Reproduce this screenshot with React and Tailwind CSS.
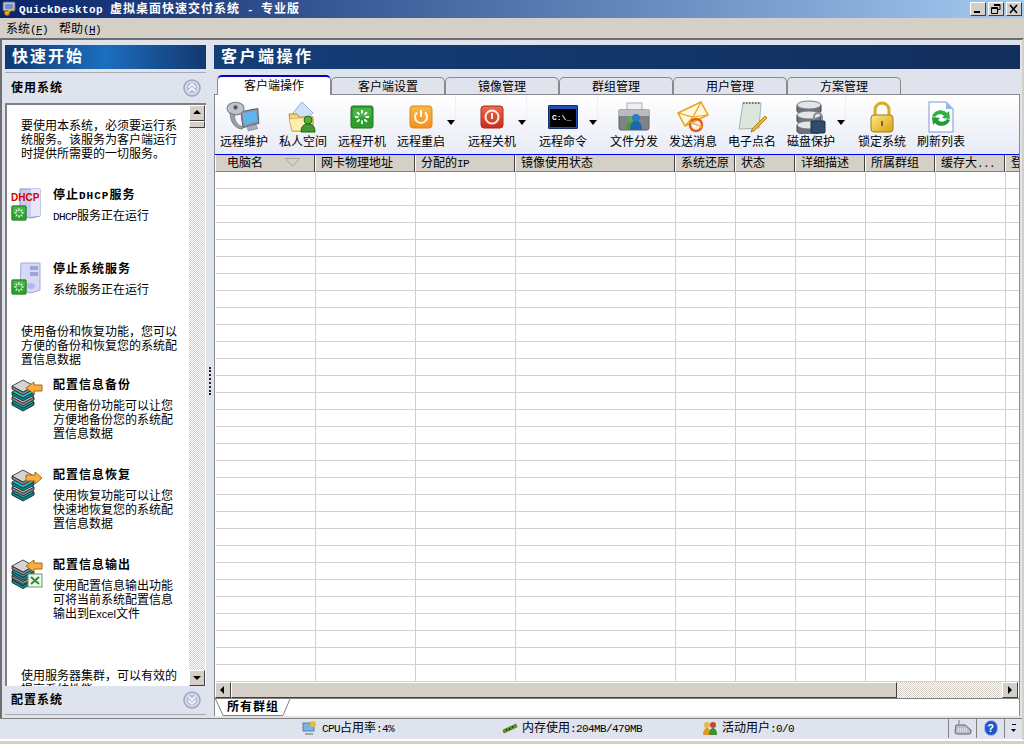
import React from "react";

const bevel = "border border-t-white border-l-white border-r-[#404040] border-b-[#404040] bg-[#d4d0c8]";
const hatch = "bg-[repeating-conic-gradient(#d4d0c8_0_25%,#ffffff_0_50%)] bg-[length:2px_2px]";

function Mono({ children }) {
  return <span className="font-['Liberation_Mono',monospace] text-[11px] tracking-[-0.6px] leading-none">{children}</span>;
}

function Spark({ size = 32, x = 0, y = 0 }) {
  // green square with a ring of white dashes
  const ticks = [0, 45, 90, 135, 180, 225, 270, 315];
  return (
    <svg x={x} y={y} width={size} height={size} viewBox="0 0 24 24">
      <rect x="1" y="1" width="22" height="22" rx="2" fill="#2f9e2f" stroke="#1c7a1c" />
      <rect x="3" y="3" width="18" height="9" fill="#5cc05c" opacity=".6" />
      {ticks.map((a) => (
        <line key={a} x1="12" y1="5" x2="12" y2="8.5" stroke="#fff" strokeWidth="1.8" transform={`rotate(${a} 12 12)`} />
      ))}
    </svg>
  );
}

function PowerIcon({ from, to, edge, ring }) {
  const id = "p" + from.slice(1);
  return (
    <svg width="24" height="24" viewBox="0 0 24 24">
      <defs>
        <linearGradient id={id} x1="0" y1="0" x2="0" y2="1">
          <stop offset="0" stopColor={from} />
          <stop offset="1" stopColor={to} />
        </linearGradient>
      </defs>
      <rect x="1" y="1" width="22" height="22" rx="3" fill={`url(#${id})`} stroke={edge} />
      {ring ? (
        <circle cx="12" cy="12" r="6.500" fill="none" stroke="#fff" strokeWidth="2" opacity=".9" />
      ) : (
        <path d="M8 7.5a6 6 0 1 0 8 0" fill="none" stroke="#fff" strokeWidth="2" opacity=".9" />
      )}
      <path d={ring ? "M12 8v6" : "M12 5v7"} stroke="#fff" strokeWidth="2" opacity=".9" />
    </svg>
  );
}

function MaintainIcon() {
  return (
    <svg width="36" height="36" viewBox="0 0 34 34">
      <path d="M14 12l16-3 1 14-15 4z" fill="#8a95a6" stroke="#5c6678" />
      <path d="M16 13.500l12.500-2.500 .8 10-12 2.800z" fill="#5fb6ee" />
      <path d="M20 26l8-2 2 4-9 2z" fill="#a9b1be" stroke="#6c7482" strokeWidth=".6" />
      <ellipse cx="9" cy="9" rx="8" ry="6" fill="#bfc4cc" stroke="#7b808a" />
      <path d="M4 13c0 8 3 13 9 15 3 1 4-1 2-2-5-2-7-6-7-11z" fill="#9aa0aa" stroke="#6d727c" strokeWidth=".7" />
      <circle cx="9" cy="8" r="2" fill="#555" />
    </svg>
  );
}

function PrivateIcon() {
  return (
    <svg width="30" height="32" viewBox="0 0 30 32">
      <path d="M14 1l11 11-11 10L5 12z" fill="#cfe2f8" stroke="#8fb0d8" />
      <path d="M1 13h8l2 3h14v14H4z" fill="#f6d879" stroke="#b08d2c" />
      <path d="M1 18l22-2-1 14H4z" fill="#fdeeb0" stroke="#c7a33c" strokeWidth=".7" />
      <circle cx="20" cy="19" r="4" fill="#4fae3c" stroke="#2c6e22" />
      <path d="M13 31c0-6 3-8 7-8s7 2 7 8z" fill="#3f9a31" stroke="#22601b" />
    </svg>
  );
}

function TerminalIcon() {
  return (
    <div className="w-[30px] h-[24px] bg-[#1d4fb4] border border-[#12306e] rounded-[1px] pt-[3px] px-[1px] pb-[1px]">
      <div className="bg-black h-full flex items-center pl-[2px] font-['Liberation_Mono',monospace] text-[8px] font-bold leading-none text-white">C:\_</div>
    </div>
  );
}

function FilesIcon() {
  return (
    <svg width="32" height="30" viewBox="0 0 32 30">
      <rect x="9" y="1" width="15" height="9" fill="#eef0f2" stroke="#a9adb3" />
      <path d="M1 8h30v18a2 2 0 0 1-2 2H3a2 2 0 0 1-2-2z" fill="#7f8388" stroke="#5f6368" />
      <rect x="1" y="8" width="30" height="6" fill="#b8bcc1" />
      <circle cx="13" cy="17" r="3" fill="#5bb04a" />
      <path d="M8 27c0-5 2-7 5-7s5 2 5 7z" fill="#4c9a3c" />
      <circle cx="18" cy="16" r="4" fill="#2e7cc4" />
      <path d="M12 28c0-7 3-9 6-9s6 2 6 9z" fill="#1e66ae" />
    </svg>
  );
}

function MailIcon() {
  return (
    <svg width="32" height="32" viewBox="0 0 32 32">
      <path d="M1 12L24 1l7 13-23 11z" fill="#fff8dc" stroke="#e8a11e" strokeWidth="1.500" />
      <path d="M1 12l15 4L24 1M8 25l8-9 15-2" fill="none" stroke="#e8a11e" strokeWidth="1.200" />
      <circle cx="19" cy="24" r="6" fill="none" stroke="#e4611a" strokeWidth="2.500" />
      <path d="M13 21l12 5" stroke="#f5b43c" strokeWidth="1.500" />
    </svg>
  );
}

function NoteIcon() {
  return (
    <svg width="32" height="32" viewBox="0 0 32 32">
      <path d="M7 2h18l-2 25-20 1z" fill="#dde6da" stroke="#aab3a8" />
      <path d="M7 2h18" stroke="#777" strokeWidth="2" strokeDasharray="1.500 1.500" />
      <path d="M29 15l2 2-13 13-3 1 1-3z" fill="#f2b23a" stroke="#a26d14" strokeWidth=".8" />
    </svg>
  );
}

function DiskIcon() {
  return (
    <svg width="32" height="34" viewBox="0 0 32 34">
      {[1, 11, 21].map((y) => (
        <g key={y}>
          <path d={`M2 ${y + 4}v6c0 2 6 4 12 4s12-2 12-4v-6z`} fill="#6e7278" stroke="#3d4045" />
          <ellipse cx="14" cy={y + 4} rx="12" ry="4" fill="#e3e5e8" stroke="#777b80" />
        </g>
      ))}
      <path d="M19 21v-4a4 4 0 0 1 8 0v4" fill="none" stroke="#8b8f95" strokeWidth="2" />
      <rect x="16" y="21" width="14" height="12" rx="1" fill="#2f4c6e" stroke="#1b2f49" />
    </svg>
  );
}

function LockIcon() {
  return (
    <svg width="26" height="32" viewBox="0 0 26 32">
      <defs>
        <linearGradient id="gold" x1="0" y1="0" x2="1" y2="1">
          <stop offset="0" stopColor="#ffe988" />
          <stop offset="1" stopColor="#d99f10" />
        </linearGradient>
      </defs>
      <path d="M6 15V9a7 7 0 0 1 14 0v6" fill="none" stroke="#d9ab22" strokeWidth="3" />
      <rect x="2" y="14" width="22" height="17" rx="3" fill="url(#gold)" stroke="#a87a12" />
      <path d="M13 20v5" stroke="#8a6410" strokeWidth="2" />
    </svg>
  );
}

function RefreshIcon() {
  return (
    <svg width="26" height="32" viewBox="0 0 26 32">
      <path d="M1 1h17l7 7v23H1z" fill="#fff" stroke="#a9b6e6" strokeWidth="1.500" />
      <path d="M18 1v7h7z" fill="#8bbcf0" />
      <path d="M4 15c2-6 11-8 15-3l2-2 1 8-8-1 2-2c-3-3-7-2-9 1z" fill="#2fb344" />
      <path d="M22 19c-2 6-11 8-15 3l-2 2-1-8 8 1-2 2c3 3 7 2 9-1z" fill="#1f9a3a" />
    </svg>
  );
}

const layers = [[16, "#1cc4c8", "#0a8a90"], [11, "#d8d8d8", "#8a8a8a"], [6, "#1cc4c8", "#0a8a90"], [0, "#d4d4d4", "#8a8a8a"]];

function Layers({ step = 1 }) {
  return layers.map(([y, c, side]) => (
    <g key={y}>
      <path d={`M1 ${y * step + 8}l11 6 11-6v3l-11 6-11-6z`} fill={side} stroke="#111" strokeWidth=".8" />
      <path d={`M1 ${y * step + 8}l11-6 11 6-11 6z`} fill={c} stroke="#222" strokeWidth=".8" />
    </g>
  ));
}

function Stack({ tail }) {
  return (
    <svg width="32" height="34" viewBox="0 0 32 34">
      <Layers />
      {tail}
    </svg>
  );
}

const arrowLeft = <path d="M15 10l8-6v3h8v6h-8v3z" fill="#f6b042" stroke="#a8660e" />;
const arrowRight = <path d="M31 10l-7-6v3h-9v6h9v3z" fill="#f6b042" stroke="#a8660e" />;

function DhcpIcon() {
  return (
    <svg width="32" height="34" viewBox="0 0 32 34">
      <path d="M9 1h20v27l-9 2-11-2z" fill="#c9cdf0" stroke="#8d92c4" />
      <path d="M20 1h9v27h-9z" fill="#e6e8fa" />
      <text x="0" y="13" fontSize="10" fontWeight="bold" fill="#d40000" fontFamily="Liberation Sans, sans-serif">DHCP</text>
      <Spark size={16} x={0} y={17} />
    </svg>
  );
}

function ServerIcon() {
  return (
    <svg width="32" height="34" viewBox="0 0 32 34">
      <path d="M10 1h19v27l-9 3-11-3z" fill="#d6d9f6" stroke="#a4a8d8" />
      <path d="M19 4h8v4h-8zM19 10h8v4h-8z" fill="#9ea4d8" />
      <ellipse cx="20" cy="24" rx="4" ry="3" fill="#b3b8e6" />
      <Spark size={16} x={0} y={17} />
    </svg>
  );
}

function ExcelStack() {
  return (
    <svg width="32" height="32" viewBox="0 0 32 32">
      <Layers step={0.85} />
      <path d="M15 8l8-6v3h8v6h-8v3z" fill="#f6b042" stroke="#a8660e" />
      <rect x="17" y="16" width="14" height="13" fill="#eef6e8" stroke="#6f9a62" />
      <path d="M20 19l8 7M28 19l-8 7" stroke="#2e8b3a" strokeWidth="2" />
    </svg>
  );
}

function Chevrons({ up }) {
  return (
    <svg width="18" height="18" viewBox="0 0 18 18">
      <circle cx="9" cy="9" r="8" fill="#d6daea" stroke="#a2a6c0" strokeWidth="1.500" />
      <circle cx="9" cy="9" r="5.500" fill="#b9bee0" />
      <path d={up ? "M5.500 8.500L9 5l3.500 3.500M5.500 12.500L9 9l3.500 3.500" : "M5.500 5.500L9 9l3.500-3.500M5.500 9.500L9 13l3.500-3.500"} fill="none" stroke="#fff" strokeWidth="1.500" />
    </svg>
  );
}

const tools = [
  { label: "远程维护", icon: <MaintainIcon /> },
  { label: "私人空间", icon: <PrivateIcon /> },
  { label: "远程开机", icon: <Spark size={24} /> },
  { label: "远程重启", icon: <PowerIcon from="#fbb84a" to="#f0901e" edge="#d98a1a" />, drop: true },
  { label: "远程关机", icon: <PowerIcon from="#ee6a4a" to="#c92c1a" edge="#a92a1c" ring />, drop: true },
  { label: "远程命令", icon: <TerminalIcon />, drop: true },
  { label: "文件分发", icon: <FilesIcon /> },
  { label: "发送消息", icon: <MailIcon /> },
  { label: "电子点名", icon: <NoteIcon /> },
  { label: "磁盘保护", icon: <DiskIcon />, drop: true },
  { label: "锁定系统", icon: <LockIcon /> },
  { label: "刷新列表", icon: <RefreshIcon /> },
];

const tabs = ["客户端设置", "镜像管理", "群组管理", "用户管理", "方案管理"];

const columns = [
  { label: "电脑名", cls: "pl-[11px]" },
  { label: "网卡物理地址" },
  { label: <>分配的<Mono>IP</Mono></> },
  { label: "镜像使用状态" },
  { label: "系统还原" },
  { label: "状态" },
  { label: "详细描述" },
  { label: "所属群组" },
  { label: <>缓存大<Mono>...</Mono></> },
  { label: "登" },
];
const gridCols = "grid grid-cols-[100px_100px_100px_160px_60px_60px_70px_70px_70px_100px] w-[890px]";
const rows = Array.from({ length: 30 }, (_, i) => i);

function TaskItem({ icon, title, children, className }) {
  return (
    <div className={`flex ${className}`}>
      <div className="w-[46px] pl-[4px] shrink-0">{icon}</div>
      <div className="w-[130px]">
        <div className="font-bold tracking-[1px] leading-[14px]">{title}</div>
        <div className="mt-[7px] leading-[14px]">{children}</div>
      </div>
    </div>
  );
}

function ScrollBtn({ dir, className = "" }) {
  const d = { up: "M4 9l4-4 4 4z", down: "M4 6l4 4 4-4z", left: "M9 4L5 8l4 4z", right: "M6 4l4 4-4 4z" }[dir];
  return (
    <div className={`w-[16px] h-[16px] shrink-0 ${bevel} flex items-center justify-center ${className}`}>
      <svg width="14" height="14" viewBox="1 1 14 14"><path d={d} fill="#000" /></svg>
    </div>
  );
}

function WinBtn({ children }) {
  return <div className={`w-[16px] h-[14px] ${bevel} flex items-center justify-center`}>{children}</div>;
}

function Stat({ icon, className, children }) {
  return (
    <div className={`flex items-center gap-[4px] ${className}`}>
      {icon}
      <span className="text-[12px]">{children}</span>
    </div>
  );
}

export default function App() {
  return (
    <div className="w-[1024px] h-[744px] overflow-hidden flex flex-col bg-[#d4d0c8] text-[12px] text-black font-['Liberation_Sans','Noto_Sans_CJK_SC',sans-serif]">
      {/* title bar */}
      <div className="h-[18px] shrink-0 flex items-center pl-[2px] pr-[2px] bg-gradient-to-r from-[#0a246a] to-[#a6caf0]">
        <svg width="16" height="16" viewBox="0 0 16 16" className="shrink-0">
          <rect x="1" y="1" width="12" height="9" rx="1" fill="#c3c9d6" stroke="#59617a" />
          <rect x="3" y="3" width="8" height="5" fill="#6f8fc9" />
          <circle cx="5" cy="12" r="2.500" fill="#e7a92b" stroke="#8a5f10" />
          <path d="M6 11l6-4" stroke="#e7a92b" strokeWidth="2" />
        </svg>
        <div className="ml-[1px] font-bold text-white tracking-[1px] whitespace-pre leading-[18px]">
          <span className="font-['Liberation_Mono',monospace] text-[11px] tracking-[0.4px]">QuickDesktop </span>
          虚拟桌面快速交付系统<span className="font-['Liberation_Mono',monospace] text-[11px] tracking-[0.4px]"> - </span>专业版
        </div>
        <div className="ml-auto flex items-center">
          <WinBtn>
            <svg width="12" height="10" viewBox="0 0 12 10"><rect x="2" y="7" width="6" height="2" fill="#000" /></svg>
          </WinBtn>
          <div className="w-[2px]" />
          <WinBtn>
            <svg width="12" height="10" viewBox="0 0 12 10"><path d="M4 .5h6v5H8M1.500 3.500h6v6h-6zM1.500 4.500h6M4 1.500h6" fill="none" stroke="#000" /></svg>
          </WinBtn>
          <div className="w-[2px]" />
          <WinBtn>
            <svg width="12" height="10" viewBox="0 0 12 10"><path d="M2 1l7 8M9 1l-7 8" stroke="#000" strokeWidth="1.600" /></svg>
          </WinBtn>
        </div>
      </div>

      {/* menu */}
      <div className="h-[20px] shrink-0 flex items-center pl-[6px] pt-[1px] gap-[11px] leading-[20px]">
        <span>系统<Mono>(<u>F</u>)</Mono></span>
        <span>帮助<Mono>(<u>H</u>)</Mono></span>
      </div>

      {/* body */}
      <div className="h-[702px] shrink-0 flex flex-col bg-[#dfe3ee] border-t-2 border-l-2 border-[#6e6e6e] border-r-2 border-r-[#d4d0c8]">
        <div className="flex-1 min-h-0 flex pl-[3px] pt-[5px]">
          {/* left panel */}
          <div className="w-[201px] shrink-0 flex flex-col">
            <div className="h-[24px] shrink-0 pl-[7px] flex items-center bg-gradient-to-r from-[#12386e] via-[#1b6fc0] to-[#12386e] text-white text-[16px] font-bold tracking-[2px] leading-[24px]">快速开始</div>
            <div className="mt-[3px] h-[1px] shrink-0 bg-[#a6a8b4]" />
            <div className="h-[30px] shrink-0 flex items-center justify-between pl-[6px] pr-[5px] font-bold tracking-[1px]">
              <span>使用系统</span>
              <Chevrons up />
            </div>
            {/* task list */}
            <div className="h-[583px] shrink-0 flex border-t-2 border-l-2 border-[#808080] bg-white overflow-hidden">
              <div className="w-[182px] shrink-0 overflow-hidden text-[12px]">
                <div className="pt-[14px] pl-[14px] leading-[14px] whitespace-nowrap">
                  要使用本系统，必须要运行系<br />统服务。该服务为客户端运行<br />时提供所需要的一切服务。
                </div>
                <TaskItem className="mt-[27px]" title={<>停止<span className="font-['Liberation_Mono',monospace] text-[11px] leading-none">DHCP</span>服务</>} icon={<DhcpIcon />}>
                  <Mono>DHCP</Mono>服务正在运行
                </TaskItem>
                <TaskItem className="mt-[39px]" title="停止系统服务" icon={<ServerIcon />}>
                  系统服务正在运行
                </TaskItem>
                <div className="mt-[28px] pl-[14px] leading-[14px] whitespace-nowrap">
                  使用备份和恢复功能，您可以<br />方便的备份和恢复您的系统配<br />置信息数据
                </div>
                <TaskItem className="mt-[11px]" title="配置信息备份" icon={<Stack tail={arrowLeft} />}>
                  使用备份功能可以让您<br />方便地备份您的系统配<br />置信息数据
                </TaskItem>
                <TaskItem className="mt-[27px]" title="配置信息恢复" icon={<Stack tail={arrowRight} />}>
                  使用恢复功能可以让您<br />快速地恢复您的系统配<br />置信息数据
                </TaskItem>
                <TaskItem className="mt-[27px]" title="配置信息输出" icon={<ExcelStack />}>
                  使用配置信息输出功能<br />可将当前系统配置信息<br />输出到<span className="text-[11px] leading-none">Excel</span>文件
                </TaskItem>
                <div className="mt-[48px] pl-[14px] leading-[14px] whitespace-nowrap">
                  使用服务器集群，可以有效的<br />提高系统性能
                </div>
              </div>
              <div className={`w-[16px] shrink-0 flex flex-col ${hatch}`}>
                <ScrollBtn dir="up" />
                <div className={`h-[7px] w-[16px] shrink-0 ${bevel}`} />
                <div className="flex-1" />
                <ScrollBtn dir="down" />
              </div>
            </div>
            <div className="h-[28px] shrink-0 flex items-center justify-between pl-[6px] pr-[5px] font-bold tracking-[1px]">
              <span>配置系统</span>
              <Chevrons />
            </div>
            <div className="h-[1px] shrink-0 bg-[#a6a8b4]" />
          </div>

          {/* splitter */}
          <div className="w-[8px] shrink-0 flex items-center justify-center">
            <div className="w-[2px] h-[28px] border-l-2 border-dotted border-[#222]" />
          </div>

          {/* right panel */}
          <div className="w-[806px] shrink-0 flex flex-col">
            <div className="h-[24px] shrink-0 pl-[7px] flex items-center bg-gradient-to-r from-[#143e78] to-[#122e5c] text-white text-[16px] font-bold tracking-[2.500px] leading-[24px]">客户端操作</div>

            {/* tabs */}
            <div className="h-[25px] shrink-0 pl-[3px] flex items-end">
              <div className="w-[114px] h-[20px] mb-[-1px] z-10 relative bg-white border-t-2 border-[#0000d8] border-x border-x-[#8a8a8a] rounded-t-[5px] text-center leading-[19px]">客户端操作</div>
              {tabs.map((t) => (
                <div key={t} className="w-[114px] h-[17px] bg-[#dfe3ee] border-t border-r border-l border-[#8a8a8a] rounded-t-[5px] text-center leading-[19px]">{t}</div>
              ))}
            </div>

            {/* tab content */}
            <div className="w-[806px] h-[622px] flex flex-col border-t border-l border-r border-[#8a8a8a] bg-white overflow-hidden">
              {/* toolbar */}
              <div className="h-[60px] shrink-0 flex pl-[5px] bg-gradient-to-b from-white to-[#e8ebf6] border-b border-[#0000f0]">
                {tools.map((t) => (
                  <div key={t.label} className={`flex shrink-0 ${t.drop ? "w-[71px]" : "w-[59px]"}`}>
                    <div className="w-[48px] flex flex-col items-center">
                      <div className="h-[39px] w-[48px] flex items-center justify-center pt-[4px]">{t.icon}</div>
                      <div className="h-[19px] leading-[17px] whitespace-nowrap">{t.label}</div>
                    </div>
                    {t.drop && (
                      <div className="w-[10px] h-[56px] ml-[1px] border-r border-[#eef0f6] flex items-center justify-center pb-[1px]">
                        <svg width="8" height="5" viewBox="0 0 8 5"><path d="M0 0h8L4 5z" fill="#000" /></svg>
                      </div>
                    )}
                  </div>
                ))}
              </div>

              {/* header */}
              <div className={`${gridCols} h-[17px] shrink-0`}>
                {columns.map((c, i) => (
                  <div key={i} className={`bg-[#d4d0c8] border-l border-l-white border-r border-r-[#404040] border-b border-b-[#808080] pl-[5px] leading-[16px] whitespace-nowrap relative ${c.cls || ""}`}>
                    {c.label}
                    {i === 0 && (
                      <svg width="15" height="9" viewBox="0 0 15 9" className="absolute left-[69px] top-[3px]"><path d="M.5.500h14L7.500 8.500z" fill="none" stroke="#a9a69e" /></svg>
                    )}
                  </div>
                ))}
              </div>

              {/* rows */}
              <div className="flex-1 min-h-0 overflow-hidden">
                {rows.map((r) => (
                  <div key={r} className={`${gridCols} h-[17px] ml-[1px] border-b border-[#d4d0c8]`}>
                    {columns.map((c, i) => (
                      <div key={i} className="border-r border-[#d4d0c8]" />
                    ))}
                  </div>
                ))}
              </div>

              {/* horizontal scrollbar */}
              <div className="h-[16px] shrink-0 flex pr-[1px]">
                <ScrollBtn dir="left" />
                <div className={`w-[666px] shrink-0 h-[16px] ${bevel}`} />
                <div className={`flex-1 ${hatch}`} />
                <ScrollBtn dir="right" />
              </div>

              {/* group tabs */}
              <div className="h-[18px] shrink-0 flex border-t border-[#808080] bg-white">
                <svg width="76" height="17" viewBox="0 0 76 17" className="shrink-0">
                  <path d="M.5 0L8 16.500h60L75 0" fill="#fff" stroke="#808080" />
                </svg>
                <div className="-ml-[76px] w-[76px] text-center font-bold tracking-[1px] leading-[17px]">所有群组</div>
              </div>
            </div>
          </div>
        </div>

        {/* status bar */}
        <div className="h-[22px] shrink-0 mt-[1px] ml-[-2px] pb-[2px] flex items-center border-t border-[#808080] border-b border-b-white bg-[#dfe3ee]">
          <Stat className="ml-[302px] w-[200px]" icon={
            <svg width="16" height="16" viewBox="0 0 16 16"><rect x="1" y="3" width="11" height="8" fill="#7fb2e6" stroke="#5c7fa8" /><circle cx="11" cy="4" r="3" fill="#e6c02a" /><path d="M3 13h8v2H3z" fill="#9aa" /></svg>
          }>
            <Mono>CPU</Mono>占用率<Mono>:4%</Mono>
          </Stat>
          <Stat className="w-[200px]" icon={
            <svg width="16" height="16" viewBox="0 0 16 16"><path d="M1 10l13-6 1 3L2 13z" fill="#3f9a31" stroke="#7a8a20" /><path d="M4 9l1 2M7 8l1 2M10 6l1 2" stroke="#222" /></svg>
          }>
            内存使用<Mono>:204MB/479MB</Mono>
          </Stat>
          <Stat className="w-[246px]" icon={
            <svg width="16" height="16" viewBox="0 0 16 16"><circle cx="5" cy="5" r="3" fill="#e8b64a" /><path d="M1 15c0-5 2-7 4-7s4 2 4 7z" fill="#d89a2a" /><circle cx="11" cy="5" r="3" fill="#c24a2a" /><path d="M7 15c0-5 2-7 4-7s4 2 4 7z" fill="#3f8f3a" /></svg>
          }>
            活动用户<Mono>:0/0</Mono>
          </Stat>
          <div className="h-[20px] w-[28px] border-l border-[#808080] flex items-center justify-center">
            <svg width="18" height="16" viewBox="0 0 18 16"><path d="M5 0v4" stroke="#777" /><path d="M2 5h9l6 5v2a2 2 0 0 1-2 2H3a2 2 0 0 1-2-2z" fill="#b8bcd4" stroke="#666" /><path d="M4 9h9M4 11h10" stroke="#fff" strokeDasharray="1 1" /></svg>
          </div>
          <div className="h-[20px] w-[28px] border-l border-[#808080] flex items-center justify-center">
            <div className="w-[14px] h-[16px] rounded-full bg-[#1f55c8] border border-[#a8c0ee] text-white font-bold text-[11px] leading-[14px] text-center">?</div>
          </div>
          <div className="h-[20px] flex-1 border-l border-[#808080] flex flex-col items-center justify-center gap-[4px]">
            <div className="w-[4px] h-[1px] bg-black" />
            <svg width="5" height="3" viewBox="0 0 5 3"><path d="M0 0h5L2.500 3z" fill="#000" /></svg>
          </div>
        </div>
      </div>
      <div className="flex-1 min-h-0 border-t border-white bg-[#d4d0c8]" />
    </div>
  );
}
